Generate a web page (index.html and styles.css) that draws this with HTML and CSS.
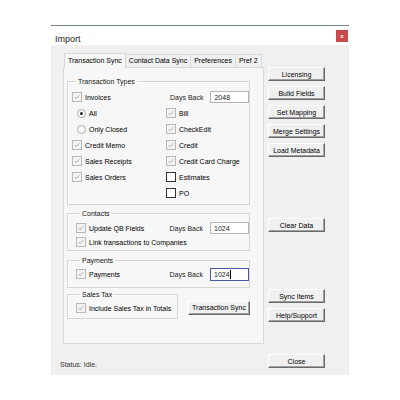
FILE: index.html
```
<html>
  <head>
    <title>Import</title>
    <meta name="viewport" content="width=device-width, initial-scale=1.0">
    <link rel="stylesheet" href="styles.css">
  </head>
  <body>
    <div class="window">
      <div class="titlebar">
        <span class="title">Import</span>
        <span class="close">x</span>
      </div>

      <div class="content">
        <div class="tabctl">
          <div class="tabs">
            <span class="tab active">Transaction Sync</span>
            <span class="tab">Contact Data Sync</span>
            <span class="tab">Preferences</span>
            <span class="tab">Pref 2</span>
          </div>

          <div class="panel">
            <!-- transaction types -->
            <fieldset class="group types">
              <legend>Transaction Types</legend>
              <div class="grid">
                <label class="opt"><span class="cb on"><svg viewBox="0 0 9 9"><path d="M2 4.6L3.7 6.3L7 2.6"/></svg></span>Invoices</label>
                <div class="days">Days Back <span class="field">2048</span></div>

                <label class="opt sub"><span class="rb on"></span>All</label>
                <label class="opt"><span class="cb on"><svg viewBox="0 0 9 9"><path d="M2 4.6L3.7 6.3L7 2.6"/></svg></span>Bill</label>

                <label class="opt sub"><span class="rb"></span>Only Closed</label>
                <label class="opt"><span class="cb on"><svg viewBox="0 0 9 9"><path d="M2 4.6L3.7 6.3L7 2.6"/></svg></span>CheckEdit</label>

                <label class="opt"><span class="cb on"><svg viewBox="0 0 9 9"><path d="M2 4.6L3.7 6.3L7 2.6"/></svg></span>Credit Memo</label>
                <label class="opt"><span class="cb on"><svg viewBox="0 0 9 9"><path d="M2 4.6L3.7 6.3L7 2.6"/></svg></span>Credit</label>

                <label class="opt"><span class="cb on"><svg viewBox="0 0 9 9"><path d="M2 4.6L3.7 6.3L7 2.6"/></svg></span>Sales Receipts</label>
                <label class="opt"><span class="cb on"><svg viewBox="0 0 9 9"><path d="M2 4.6L3.7 6.3L7 2.6"/></svg></span>Credit Card Charge</label>

                <label class="opt"><span class="cb on"><svg viewBox="0 0 9 9"><path d="M2 4.6L3.7 6.3L7 2.6"/></svg></span>Sales Orders</label>
                <label class="opt"><span class="cb"></span>Estimates</label>

                <span></span>
                <label class="opt"><span class="cb"></span>PO</label>
              </div>
            </fieldset>

            <!-- contacts -->
            <fieldset class="group contacts">
              <legend>Contacts</legend>
              <div class="row">
                <label class="opt"><span class="cb on"><svg viewBox="0 0 9 9"><path d="M2 4.6L3.7 6.3L7 2.6"/></svg></span>Update QB Fields</label>
                <div class="days">Days Back <span class="field">1024</span></div>
              </div>
              <label class="opt"><span class="cb on"><svg viewBox="0 0 9 9"><path d="M2 4.6L3.7 6.3L7 2.6"/></svg></span>Link transactions to Companies</label>
            </fieldset>

            <!-- payments -->
            <fieldset class="group payments">
              <legend>Payments</legend>
              <div class="row">
                <label class="opt"><span class="cb on"><svg viewBox="0 0 9 9"><path d="M2 4.6L3.7 6.3L7 2.6"/></svg></span>Payments</label>
                <div class="days">Days Back <span class="field focus">1024<i class="caret"></i></span></div>
              </div>
            </fieldset>

            <div class="taxrow">
              <fieldset class="group tax">
                <legend>Sales Tax</legend>
                <label class="opt"><span class="cb on"><svg viewBox="0 0 9 9"><path d="M2 4.6L3.7 6.3L7 2.6"/></svg></span>Include Sales Tax in Totals</label>
              </fieldset>
              <button class="btn sync">Transaction Sync</button>
            </div>
          </div>
        </div>

        <div class="side">
          <button class="btn">Licensing</button>
          <button class="btn">Build Fields</button>
          <button class="btn">Set Mapping</button>
          <button class="btn">Merge Settings</button>
          <button class="btn">Load Metadata</button>
          <button class="btn clear">Clear Data</button>
          <button class="btn items">Sync Items</button>
          <button class="btn">Help/Support</button>
        </div>
      </div>

      <div class="statusbar">
        <span class="status">Status: Idle.</span>
        <button class="btn">Close</button>
      </div>
    </div>
  </body>
</html>
```

FILE: styles.css
```
body {
  margin: 0;
  background-color: #ffffff;
  font-family: "Liberation Sans", Arial, sans-serif;
  font-size: 7px;
  color: #000000;
}

.window {
  width: 298px;
  margin: 25px 0 0 51px;
  border-top: 1px solid #76868c;
  background-color: #f0f0f0;
}

.titlebar {
  height: 19px;
  background-color: #ffffff;
  display: flex;
  align-items: center;
  justify-content: space-between;
  padding: 0 1px 0 4px;
}

.title {
  font-size: 9px;
  color: #222222;
  padding-top: 6px;
}

.close {
  width: 12px;
  height: 12px;
  background-color: #c94a4a;
  color: #ffffff;
  font-size: 6px;
  font-weight: bold;
  display: flex;
  align-items: center;
  justify-content: center;
}

.content {
  display: flex;
  gap: 4px;
  padding: 9px 0 0 12px;
}

/* tabs */
.tabctl {
  width: 201px;
  flex-shrink: 0;
}

.tabs {
  display: flex;
  height: 13px;
  align-items: flex-end;
  padding-left: 1px;
}

.tab {
  flex-shrink: 0;
  white-space: nowrap;
  height: 12px;
  line-height: 12px;
  padding: 0 3px;
  border: 1px solid #d9d9d9;
  border-bottom: none;
  border-left: none;
  background-color: #f0f0f0;
}

.tab.active {
  height: 14px;
  line-height: 14px;
  border-left: 1px solid #d9d9d9;
  background-color: #f7f7f7;
  margin-bottom: -1px;
  position: relative;
}

.panel {
  box-sizing: border-box;
  height: 277px;
  border: 1px solid #d9d9d9;
  background-color: #f7f7f7;
  padding: 9px 13px 0 3px;
}

/* group boxes */
.group {
  margin: 0;
  border: 1px solid #d6d6d6;
  box-shadow: inset 1px 1px 0 #ffffff;
  min-width: 0;
}

.group legend {
  padding: 0 2px;
  margin-left: 4px;
  line-height: 9px;
  color: #111111;
  white-space: nowrap;
}

.types {
  padding: 3px 0 3px 4px;
}

.grid {
  display: grid;
  grid-template-columns: 94px 1fr;
  grid-auto-rows: 16px;
  align-items: center;
}

.contacts {
  margin-top: 4px;
  padding: 3px 0 1px 8px;
}

.payments {
  margin-top: 5px;
  padding: 2px 0 6px 8px;
}

.row {
  display: flex;
  align-items: center;
  justify-content: space-between;
  height: 14px;
}

.contacts .opt {
  height: 14px;
}

.taxrow {
  display: flex;
  align-items: center;
  gap: 10px;
  margin-top: 2px;
}

.tax {
  width: 111px;
  box-sizing: border-box;
  padding: 2px 0 3px 8px;
}

.tax .opt {
  height: 14px;
}

/* options */
.opt {
  display: flex;
  align-items: center;
  gap: 3px;
  white-space: nowrap;
}

.opt.sub {
  padding-left: 5px;
  gap: 3px;
}

.cb {
  flex-shrink: 0;
  width: 8px;
  height: 8px;
  border: 1px solid #333333;
  background-color: #ffffff;
  display: inline-flex;
}

.cb.on {
  border-color: #b8b8b8;
  background-color: #f4f4f4;
}

.cb svg {
  width: 8px;
  height: 8px;
  fill: none;
  stroke: #9a9a9a;
  stroke-width: 1;
}

.rb {
  flex-shrink: 0;
  width: 7px;
  height: 7px;
  border-radius: 50%;
  border: 1px solid #a8a8a8;
  background-color: #ffffff;
  display: inline-flex;
  align-items: center;
  justify-content: center;
}

.rb.on::after {
  content: "";
  width: 3px;
  height: 3px;
  border-radius: 50%;
  background-color: #222222;
}

.days {
  display: flex;
  align-items: center;
  gap: 7px;
  padding-left: 4px;
  color: #222222;
  white-space: nowrap;
  flex-shrink: 0;
}

.field {
  box-sizing: border-box;
  width: 39px;
  height: 12px;
  border: 1px solid #b4b4b4;
  background-color: #ffffff;
  padding-left: 3px;
  display: flex;
  align-items: center;
}

.field.focus {
  height: 13px;
  border-color: #4a58a8;
}

.caret {
  width: 1px;
  height: 9px;
  background-color: #000000;
}

/* buttons */
.btn {
  height: 14px;
  padding: 0;
  white-space: nowrap;
  font-family: "Liberation Sans", Arial, sans-serif;
  font-size: 7px;
  color: #000000;
  background-color: #f0f0f0;
  border: 1px solid;
  border-color: #ffffff #6a6a6a #6a6a6a #ffffff;
  box-shadow: inset -1px -1px 0 #a0a0a0;
}

.side {
  width: 57px;
  flex-shrink: 0;
  padding-top: 13px;
  display: flex;
  flex-direction: column;
  gap: 5px;
}

.side .btn {
  width: 57px;
}

.side .clear {
  margin-top: 56px;
}

.side .items {
  margin-top: 52px;
}

.sync {
  width: 62px;
  margin-top: 6px;
}

.statusbar {
  display: flex;
  align-items: center;
  justify-content: space-between;
  padding: 10px 24px 7px 9px;
}

.statusbar .btn {
  width: 57px;
}

.status {
  color: #333333;
  padding-top: 6px;
}
```
